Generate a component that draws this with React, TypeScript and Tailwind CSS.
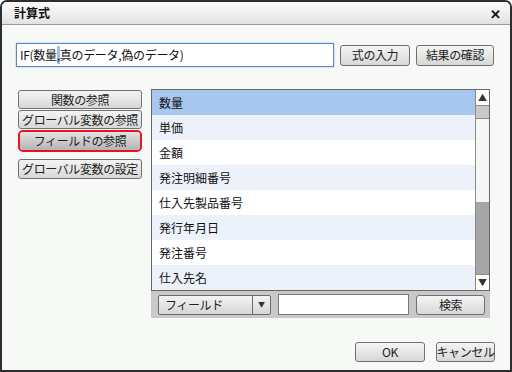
import React from "react";

const font = { fontFamily: '"Noto Sans CJK JP", "Liberation Sans", sans-serif' };

const fields = ["数量", "単価", "金額", "発注明細番号", "仕入先製品番号", "発行年月日", "発注番号", "仕入先名"];

function Btn({ label, className = "" }: { label: string; className?: string }) {
  return (
    <button
      className={`flex items-center justify-center whitespace-nowrap rounded-[3px] border border-[#707070] bg-gradient-to-b from-[#f4f4f4] to-[#d8d8d8] text-[12px] leading-none tracking-[-0.4px] text-[#222] ${className}`}
    >
      {label}
    </button>
  );
}

export default function App() {
  return (
    <div style={font} className="h-[372px] w-[512px] bg-white">
      <div className="flex h-[372px] w-[512px] flex-col overflow-hidden rounded-t-[7px] border-2 border-[#2e2e2e] bg-[#f7f9f6]">
        {/* title bar */}
        <div className="flex h-[23px] items-center justify-between border-b border-[#9a9a9a] bg-gradient-to-b from-[#fdfdfd] to-[#e2e2e2] pl-[12px] pr-[9px]">
          <span className="text-[12px] font-bold text-[#111]">計算式</span>
          <span className="text-[13px] font-bold leading-none text-[#111]">✕</span>
        </div>

        {/* formula row */}
        <div className="mt-[18px] flex items-center pl-[14px]">
          <div className="flex h-[24px] w-[318px] items-center border border-[#5f87bf] bg-white px-[3px] text-[12px] tracking-[-0.3px] text-[#111] shadow-[0_0_2px_#9fc1ec]">
            IF(数量<span className="bg-[#9ec1ee]">,</span>真のデータ,偽のデータ)
          </div>
          <Btn label="式の入力" className="ml-[6px] h-[21px] w-[70px]" />
          <Btn label="結果の確認" className="ml-[6px] h-[21px] w-[78px]" />
        </div>

        {/* middle */}
        <div className="mt-[22px] flex pl-[16px]">
          <div className="flex w-[124px] flex-col pt-[1px]">
            <Btn label="関数の参照" className="h-[19px] w-full" />
            <Btn label="グローバル変数の参照" className="mt-[1px] h-[19px] w-full" />
            <div className="mt-[1px] rounded-[5px] border-2 border-[#e8131b]">
              <button className="flex h-[18px] w-full items-center justify-center rounded-[3px] bg-gradient-to-b from-[#e2e2e2] to-[#b4b4b4] text-[12px] leading-none tracking-[-0.4px] text-[#222]">
                フィールドの参照
              </button>
            </div>
            <Btn label="グローバル変数の設定" className="mt-[7px] h-[20px] w-full" />
          </div>

          <div className="ml-[9px] flex w-[339px] flex-col">
            <div className="flex h-[202px] border border-[#686868] bg-white">
              <div className="flex flex-1 flex-col">
                {fields.map((f, i) => (
                  <div
                    key={f}
                    className={`flex h-[25px] items-center pl-[7px] text-[12px] text-[#111] ${
                      i === 0 ? "bg-[#a8c7ee]" : i % 2 === 1 ? "bg-[#edf2fa]" : "bg-white"
                    }`}
                  >
                    {f}
                  </div>
                ))}
              </div>
              <div className="flex w-[14px] flex-col border-l border-[#8a8a8a] bg-white">
                <div className="flex h-[16px] items-center justify-center border-b border-[#8a8a8a] text-[9px] leading-none text-[#333]">
                  ▲
                </div>
                <div className="h-[13px] border-b border-[#8a8a8a] bg-[#c9c9c9]" />
                <div className="h-[83px] bg-[#f6f6f6]" />
                <div className="flex-1 bg-[#a6a6a6]" />
                <div className="flex h-[16px] items-center justify-center border-t border-[#8a8a8a] bg-white text-[9px] leading-none text-[#333]">
                  ▼
                </div>
              </div>
            </div>
            <div className="flex h-[27px] items-center bg-[#c9c9c9] pl-[7px]">
              <div className="flex h-[20px] w-[113px] rounded-[2px] border border-[#6a6a6a] bg-gradient-to-b from-[#f4f4f4] to-[#d6d6d6]">
                <div className="flex flex-1 items-center pl-[6px] text-[12px] leading-none tracking-[-0.4px] text-[#222]">フィールド</div>
                <div className="flex w-[18px] items-center justify-center border-l border-[#6a6a6a] text-[7px] leading-none text-[#333]">
                  ▼
                </div>
              </div>
              <div className="ml-[7px] h-[21px] w-[131px] border border-[#777] bg-white" />
              <Btn label="検索" className="ml-[7px] h-[20px] w-[69px]" />
            </div>
          </div>
        </div>

        {/* footer */}
        <div className="mt-[24px] flex justify-end pr-[15px]">
          <Btn label="OK" className="h-[20px] w-[70px]" />
          <Btn label="キャンセル" className="ml-[11px] h-[20px] w-[59px]" />
        </div>
      </div>
    </div>
  );
}
